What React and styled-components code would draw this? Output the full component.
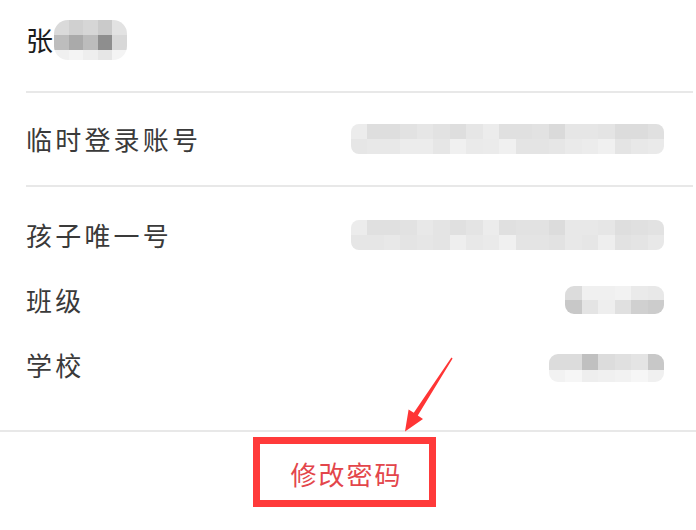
import React from "react";
import styled, { createGlobalStyle } from "styled-components";

const GlobalStyle = createGlobalStyle`
  body {
    margin: 0;
    background: #ffffff;
    font-family: "Noto Sans CJK SC", "Noto Sans", sans-serif;
  }
`;

const Page = styled.div`
  position: relative;
  width: 696px;
  height: 530px;
  overflow: hidden;
  background: #ffffff;
`;

const NameRow = styled.div`
  height: 91px;
  display: flex;
  align-items: center;
  padding-left: 26px;
  padding-bottom: 12px;
  box-sizing: border-box;
`;

const Name = styled.span`
  font-size: 27px;
  line-height: 1;
  color: #1c1c1c;
`;

const Divider = styled.div`
  height: 2px;
  background: #e8e8e8;
  margin-left: ${(p) => (p.$full ? 0 : 26)}px;
  margin-right: ${(p) => (p.$full ? 0 : 3)}px;
`;

const Section = styled.div`
  padding: 15px 0 33px;
`;

const InfoRow = styled.div`
  height: ${(p) => p.$height}px;
  display: flex;
  align-items: center;
  justify-content: space-between;
  padding: 0 32px 0 26px;
`;

const Label = styled.span`
  font-size: 26px;
  letter-spacing: 3.2px;
  line-height: 1;
  color: #3a3a3a;
`;

const MosaicGrid = styled.div`
  display: grid;
  grid-template-columns: repeat(${(p) => p.$cols}, ${(p) => p.$cell}px);
  grid-template-rows: ${(p) => p.$rows};
  border-radius: ${(p) => p.$radius}px;
  overflow: hidden;
  margin-left: ${(p) => p.$gap || 0}px;
  margin-top: ${(p) => p.$shift || 0}px;
  filter: blur(0.4px);
`;

const Cell = styled.div`
  background: ${(p) => p.$c};
`;

const Footer = styled.div`
  display: flex;
  justify-content: center;
  padding-top: 5px;
  padding-right: 7px;
`;

const Highlight = styled.div`
  width: 183px;
  height: 70px;
  box-sizing: border-box;
  border: 7px solid #ff3a3a;
  display: flex;
  align-items: center;
  justify-content: center;
  padding-top: 4px;
  padding-left: 4px;
`;

const ActionText = styled.span`
  font-size: 26px;
  letter-spacing: 2px;
  line-height: 1;
  color: #e3464b;
`;

const ArrowLayer = styled.svg`
  position: absolute;
  left: 0;
  top: 0;
  pointer-events: none;
`;

function Mosaic({ rows, cell, heights, radius, gap, shift }) {
  const cols = rows[0].length;
  return (
    <MosaicGrid
      $cols={cols}
      $cell={cell}
      $rows={heights.map((h) => h + "px").join(" ")}
      $radius={radius}
      $gap={gap}
      $shift={shift}
    >
      {rows.flat().map((c, i) => (
        <Cell key={i} $c={c} />
      ))}
    </MosaicGrid>
  );
}

const nameBlur = [
  ["#dadada", "#d0d0d0", "#d6d6d6", "#cacaca", "#e2e2e2"],
  ["#bdbdbd", "#aaaaaa", "#bcbcbc", "#8e8e8e", "#d8d8d8"],
  ["#f0f0f0", "#f4f4f4", "#eeeeee", "#e6e6e6", "#f4f4f4"],
];

const accountBlur = [
  ["#ececec", "#dedede", "#dedede", "#e2e2e2", "#e6e6e6", "#e2e2e2", "#dedede", "#e6e6e6", "#ececec", "#e0e0e0", "#e0e0e0", "#e2e2e2", "#dadada", "#e6e6e6", "#e6e6e6", "#e4e4e4", "#dcdcdc", "#dcdcdc", "#e0e0e0"],
  ["#e6e6e6", "#e8e8e8", "#e8e8e8", "#ececec", "#ececec", "#e6e6e6", "#f0f0f0", "#eaeaea", "#ebebeb", "#f0f0f0", "#e4e4e4", "#e4e4e4", "#e6e6e6", "#eaeaea", "#ececec", "#f0f0f0", "#e4e4e4", "#e8e8e8", "#eaeaea"],
];

const childBlur = [
  ["#ececec", "#e0e0e0", "#e0e0e0", "#e2e2e2", "#e8e8e8", "#e4e4e4", "#e0e0e0", "#e4e4e4", "#ececec", "#e0e0e0", "#e2e2e2", "#e2e2e2", "#dcdcdc", "#e8e8e8", "#e8e8e8", "#e6e6e6", "#dedede", "#e0e0e0", "#e2e2e2"],
  ["#e6e6e6", "#e6e6e6", "#e8e8e8", "#e4e4e4", "#e6e6e6", "#e4e4e4", "#eeeeee", "#e8e8e8", "#eaeaea", "#f0f0f0", "#e4e4e4", "#e4e4e4", "#e2e2e2", "#e8e8e8", "#e6e6e6", "#eeeeee", "#e2e2e2", "#e4e4e4", "#e8e8e8"],
];

const classBlur = [
  ["#dcdcdc", "#f0f0f0", "#f0f0f0", "#f2f2f2", "#eaeaea", "#e8e8e8"],
  ["#c8c8c8", "#e4e4e4", "#eeeeee", "#e0e0e0", "#d0d0d0", "#cccccc"],
];

const schoolBlur = [
  ["#dcdcdc", "#dcdcdc", "#c0c0c0", "#dcdcdc", "#e0e0e0", "#e4e4e4", "#c8c8c8"],
  ["#f2f2f2", "#f6f6f6", "#eeeeee", "#f0f0f0", "#f2f2f2", "#f6f6f6", "#f0f0f0"],
];

export default function App() {
  return (
    <Page>
      <GlobalStyle />
      <NameRow>
        <Name>张</Name>
        <Mosaic rows={nameBlur} cell={14.5} heights={[15, 15, 10]} radius={14} gap={1} />
      </NameRow>
      <Divider />
      <InfoRow $height={92}>
        <Label>临时登录账号</Label>
        <Mosaic rows={accountBlur} cell={16.5} heights={[15, 15]} radius={8} />
      </InfoRow>
      <Divider />
      <Section>
        <InfoRow $height={65}>
          <Label>孩子唯一号</Label>
          <Mosaic rows={childBlur} cell={16.5} heights={[15, 15]} radius={8} />
        </InfoRow>
        <InfoRow $height={65}>
          <Label>班级</Label>
          <Mosaic rows={classBlur} cell={16.5} heights={[14, 14]} radius={9} />
        </InfoRow>
        <InfoRow $height={65}>
          <Label>学校</Label>
          <Mosaic rows={schoolBlur} cell={16.5} heights={[16, 12]} radius={9} shift={6} />
        </InfoRow>
      </Section>
      <Divider $full />
      <Footer>
        <Highlight>
          <ActionText>修改密码</ActionText>
        </Highlight>
      </Footer>
      <ArrowLayer width="696" height="530" viewBox="0 0 696 530">
        <polygon
          fill="#ff3535"
          points="452.6,358.4 417.8,415.6 423,419 405,431.5 408.6,409.6 413.8,412.8 451.4,357.6"
        />
      </ArrowLayer>
    </Page>
  );
}
